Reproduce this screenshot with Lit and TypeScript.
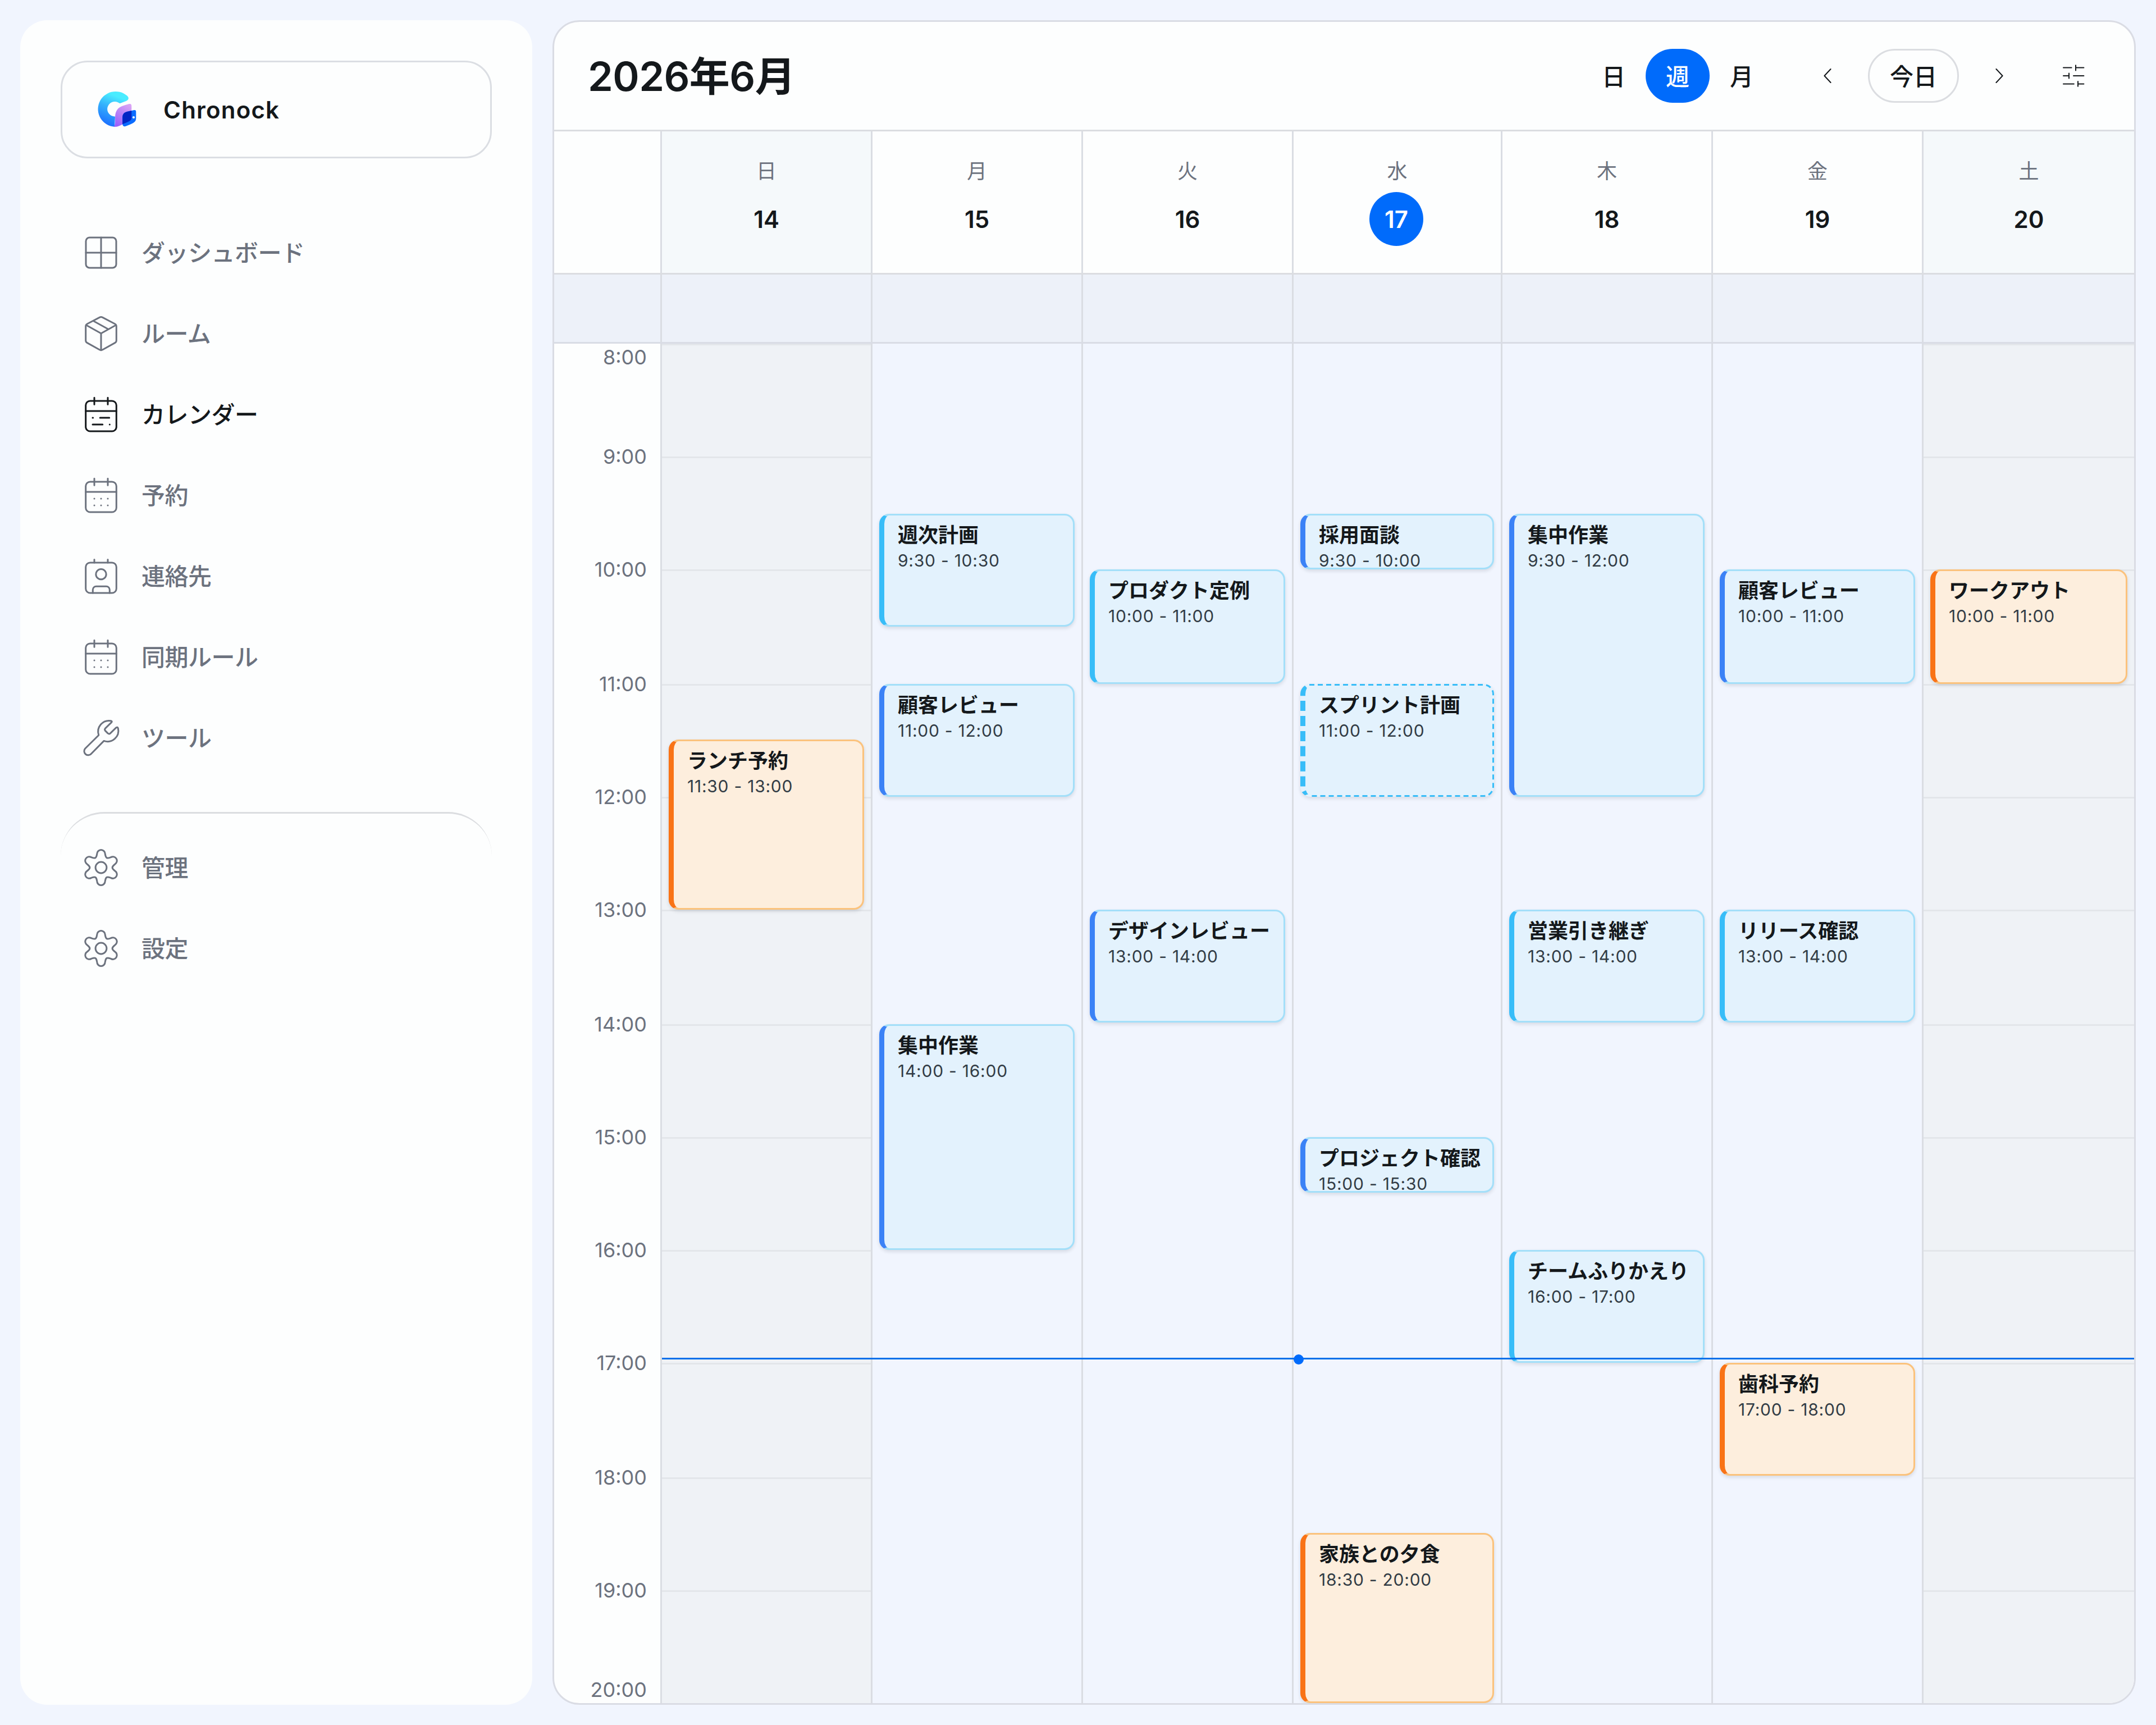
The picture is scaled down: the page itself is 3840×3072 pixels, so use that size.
import { LitElement, html, svg, css } from 'lit';
import { customElement, property } from 'lit/decorators.js';
import { classMap } from 'lit/directives/class-map.js';
import { styleMap } from 'lit/directives/style-map.js';

interface CalendarEvent {
  title: string;
  start: number;
  end: number;
  tone: 'sky' | 'blue' | 'orange' | 'tentative';
}

interface Day {
  name: string;
  date: number;
  weekend?: boolean;
  today?: boolean;
  events: CalendarEvent[];
}

const FIRST_HOUR = 8;
const UNIT = 3;
const HOUR_UNITS = 67.25;
const HOURS = [8, 9, 10, 11, 12, 13, 14, 15, 16, 17, 18, 19, 20];
// top of every hour row, snapped to whole layout units
const HOUR_TOPS = [0, 201, 402, 606, 807, 1008, 1212, 1413, 1614, 1815, 2019, 2220, 2421];

const startOffset = (time: number) => {
  const passed = time - FIRST_HOUR;
  return Number.isInteger(passed) ? HOUR_TOPS[passed] : Math.round(passed * HOUR_UNITS) * UNIT;
};

const endOffset = (time: number) => Math.ceil((time - FIRST_HOUR) * HOUR_UNITS - 0.5) * UNIT;

const clock = (time: number) => `${Math.floor(time)}:${time % 1 ? '30' : '00'}`;

const DAYS: Day[] = [
  { name: '日', date: 14, weekend: true, events: [{ title: 'ランチ予約', start: 11.5, end: 13, tone: 'orange' }] },
  {
    name: '月',
    date: 15,
    events: [
      { title: '週次計画', start: 9.5, end: 10.5, tone: 'sky' },
      { title: '顧客レビュー', start: 11, end: 12, tone: 'blue' },
      { title: '集中作業', start: 14, end: 16, tone: 'blue' },
    ],
  },
  {
    name: '火',
    date: 16,
    events: [
      { title: 'プロダクト定例', start: 10, end: 11, tone: 'sky' },
      { title: 'デザインレビュー', start: 13, end: 14, tone: 'blue' },
    ],
  },
  {
    name: '水',
    date: 17,
    today: true,
    events: [
      { title: '採用面談', start: 9.5, end: 10, tone: 'blue' },
      { title: 'スプリント計画', start: 11, end: 12, tone: 'tentative' },
      { title: 'プロジェクト確認', start: 15, end: 15.5, tone: 'blue' },
      { title: '家族との夕食', start: 18.5, end: 20, tone: 'orange' },
    ],
  },
  {
    name: '木',
    date: 18,
    events: [
      { title: '集中作業', start: 9.5, end: 12, tone: 'blue' },
      { title: '営業引き継ぎ', start: 13, end: 14, tone: 'sky' },
      { title: 'チームふりかえり', start: 16, end: 17, tone: 'sky' },
    ],
  },
  {
    name: '金',
    date: 19,
    events: [
      { title: '顧客レビュー', start: 10, end: 11, tone: 'blue' },
      { title: 'リリース確認', start: 13, end: 14, tone: 'sky' },
      { title: '歯科予約', start: 17, end: 18, tone: 'orange' },
    ],
  },
  { name: '土', date: 20, weekend: true, events: [{ title: 'ワークアウト', start: 10, end: 11, tone: 'orange' }] },
];

// one tooth of the gear, turned six times round the centre
const gearOutline = () => {
  let d = 'M8.65 6.2';
  for (let i = 0; i < 6; i++) {
    const a = (i * Math.PI) / 3;
    const p = (x: number, y: number) => {
      const dx = x - 12;
      const dy = y - 12;
      return `${(12 + dx * Math.cos(a) - dy * Math.sin(a)).toFixed(2)} ${(12 + dx * Math.sin(a) + dy * Math.cos(a)).toFixed(2)}`;
    };
    d += `C${p(9.35, 5.8)} ${p(9.4, 4.9)} ${p(9.6, 3.9)}A2.4 2.4 0 0 1 ${p(14.4, 3.9)}C${p(14.6, 4.9)} ${p(14.65, 5.8)} ${p(15.35, 6.2)}`;
  }
  return d + 'z';
};

const calendarFrame = svg`
  <rect x="2.9" y="4" width="18.2" height="18" rx="2.6" />
  <path d="M2.9 10h18.2M8 2.1v4M16 2.1v4" />`;

const ICONS: Record<string, unknown> = {
  dashboard: svg`
    <rect x="3" y="3" width="18" height="18" rx="2.2" />
    <path d="M12 3v18M3 12h18" />`,
  room: svg`
    <path d="M11.2 2.35a1.9 1.9 0 0 1 1.6 0l7.4 3.9a1.6 1.6 0 0 1 .9 1.4v8.5a1.6 1.6 0 0 1-.9 1.4l-7.4 4.1a1.9 1.9 0 0 1-1.6 0l-7.4-4.1a1.6 1.6 0 0 1-.9-1.4v-8.5a1.6 1.6 0 0 1 .9-1.4z" />
    <path d="M3.2 7l8.8 4.9L20.8 7M12 11.9v10M7.4 4.5l8.9 4.9" />`,
  calendar: svg`${calendarFrame}
    <path d="M7 14h.2M11.4 14h5.5M7 18h5.9M17.1 18h.01" />`,
  booking: svg`${calendarFrame}
    <path d="M8 14h.01M12 14h.01M16 14h.01M8 18h.01M12 18h.01M16 18h.01" />`,
  contact: svg`
    <rect x="2.9" y="4" width="18.2" height="18" rx="2.6" />
    <path d="M8 2.2v1.8M16 2.2v1.8M7.1 22v-1.9a2 2 0 0 1 2-2h6a2 2 0 0 1 2 2v1.9" />
    <circle cx="12" cy="10.9" r="3.05" />`,
  tool: svg`
    <path d="M18.2 2.8L14.5 6.4Q13.9 7.1 14.5 7.8L16 9.3Q16.8 10 17.5 9.3L21 5.9Q21.8 5.4 22.1 6.3A6.4 6.4 0 0 1 13.7 13.8L6.2 21.4A2.35 2.35 0 0 1 2.5 18.4L10.6 10.4A6.5 6.5 0 0 1 17.8 1.9Q18.8 2.2 18.2 2.8z" />`,
  gear: svg`
    <path d=${gearOutline()} />
    <circle cx="12" cy="12" r="3.3" />`,
  prev: svg`<path d="M14.8 6L9.2 12l5.6 6" />`,
  next: svg`<path d="M9.2 6l5.6 6-5.6 6" />`,
  filter: svg`
    <path d="M3 4.8h7.3M14 4.8h7.2M14 2.6v4.6M3 12h5M8 9.8v4.4M12 12h9.2M3 19.2h9.4M16 19.2h5.2M16 17v4.4" />`,
};

@customElement('ui-icon')
export class UiIcon extends LitElement {
  @property() name = '';

  static styles = css`
    :host {
      display: block;
      flex: none;
      width: 72px;
      height: 72px;
    }
    .glyph {
      display: block;
      width: 100%;
      height: 100%;
      fill: none;
      stroke: currentColor;
      stroke-width: 1;
      stroke-linecap: round;
      stroke-linejoin: round;
    }
  `;

  render() {
    return html`<svg class="glyph" viewBox="0 0 24 24">${ICONS[this.name]}</svg>`;
  }
}

@customElement('side-nav')
export class SideNav extends LitElement {
  static styles = css`
    :host {
      display: block;
      box-sizing: border-box;
      background: #fdfefe;
      border-radius: 48px;
      padding: 72px;
    }
    .brand {
      display: flex;
      align-items: center;
      gap: 48px;
      box-sizing: border-box;
      height: 174px;
      padding: 0 60px;
      border: 3px solid #dbdee3;
      border-radius: 48px;
      color: #14181b;
      font-size: 42px;
      font-weight: 600;
      letter-spacing: 1.2px;
    }
    .logo {
      width: 72px;
      height: 72px;
    }
    .menu {
      display: flex;
      flex-direction: column;
      margin-top: 96px;
    }
    .item {
      display: flex;
      align-items: center;
      gap: 36px;
      height: 144px;
      padding-left: 36px;
      color: #6c727e;
      font-size: 42px;
      font-weight: 500;
      letter-spacing: -0.5px;
    }
    .item.active {
      color: #14181b;
    }
    .label {
      padding-bottom: 6px;
    }
    .foot {
      display: flex;
      flex-direction: column;
      margin-top: 60px;
      padding-top: 24px;
      border-top: 3px solid #dbdde0;
      border-radius: 78px 78px 0 0;
    }
  `;

  item(icon: string, label: string, active = false) {
    return html`
      <a class=${classMap({ item: true, active })}>
        <ui-icon name=${icon}></ui-icon>
        <span class="label">${label}</span>
      </a>
    `;
  }

  render() {
    return html`
      <div class="brand">
        <svg class="logo" viewBox="0 0 72 72">
          <defs>
            <linearGradient id="c" x1=".7" y1="0" x2=".35" y2="1">
              <stop offset=".15" stop-color="#4aecff" />
              <stop offset=".5" stop-color="#34b0fc" />
              <stop offset="1" stop-color="#1b6dff" />
            </linearGradient>
            <linearGradient id="p" x1=".8" y1="0" x2=".3" y2="1">
              <stop offset="0" stop-color="#d9a4f5" />
              <stop offset="1" stop-color="#9a60fb" />
            </linearGradient>
          </defs>
          <path
            fill="url(#c)"
            d="M33.3 66.7A31.4 31.4 0 1 1 55.5 11.6Q58.5 14.6 57.6 17.2Q57 19.6 54 20.8L43.5 24.8Q41.5 25.2 40 23.8A13.2 13.2 0 1 0 34 48.4Q33.5 58 33.3 66.7z"
          />
          <path
            fill="url(#p)"
            d="M59 26.1Q63.3 25 63.3 30V51C63.3 56 58 57.5 51 60.5C44 63.5 40 67.5 31.5 66.7Q34.2 64 34.1 59V49C34.5 38 39 33 47 29.8Q53 27.5 59 26.1z"
          />
          <path
            fill="#0a6cff"
            d="M68 37Q71.3 36.5 71.3 40V52C71.3 58 66 60.5 60 63L53 65.8Q47 67.5 47.2 61V50C47.4 43 51 41 57 39.6Z"
          />
          <path fill="#0325c4" d="M63.3 38.1V51C63.3 56 58 57.5 51 60.5L47.2 62.2V50C47.4 43 51 41 57 39.6Z" />
          <circle cx="67" cy="50" r="2.1" fill="#fff" />
        </svg>
        <span>Chronock</span>
      </div>
      <nav class="menu">
        ${this.item('dashboard', 'ダッシュボード')}
        ${this.item('room', 'ルーム')}
        ${this.item('calendar', 'カレンダー', true)}
        ${this.item('booking', '予約')}
        ${this.item('contact', '連絡先')}
        ${this.item('booking', '同期ルール')}
        ${this.item('tool', 'ツール')}
      </nav>
      <div class="foot">
        ${this.item('gear', '管理')}
        ${this.item('gear', '設定')}
      </div>
    `;
  }
}

@customElement('week-calendar')
export class WeekCalendar extends LitElement {
  static styles = css`
    :host {
      display: flex;
      flex-direction: column;
      box-sizing: border-box;
      overflow: hidden;
      border: 3px solid #dadce4;
      border-radius: 48px;
      background: #fdfefe;
      color: #14181b;
    }
    .toolbar {
      display: flex;
      align-items: center;
      height: 192px;
      padding: 0 72px 0 60px;
      border-bottom: 3px solid #dbdde1;
    }
    .title {
      flex: 1;
      margin: 0;
      padding-bottom: 9px;
      font-size: 72px;
      font-weight: 600;
      letter-spacing: -0.6px;
    }
    .views {
      display: flex;
      align-items: center;
      margin-right: 48px;
      font-size: 42px;
      font-weight: 500;
    }
    .view {
      display: flex;
      align-items: center;
      justify-content: center;
      box-sizing: border-box;
      width: 114px;
      height: 96px;
      padding-bottom: 4px;
      border-radius: 48px;
    }
    .view.active {
      background: #006bfb;
      color: #fff;
    }
    .arrow {
      width: 48px;
      height: 48px;
      padding: 24px;
    }
    .now {
      box-sizing: border-box;
      display: flex;
      align-items: center;
      justify-content: center;
      width: 162px;
      height: 96px;
      margin: 0 24px;
      padding-bottom: 4px;
      border: 3px solid #dbdde1;
      border-radius: 48px;
      font-size: 42px;
      font-weight: 500;
    }
    .filter {
      width: 48px;
      height: 48px;
      margin: 0 12px 0 60px;
    }
    .row {
      display: grid;
      grid-template-columns: 192px 375px 375px 375px 372px 375px 375px 375px;
    }
    .head {
      height: 252px;
      border-bottom: 3px solid #dbdde1;
    }
    .allday {
      height: 120px;
      border-bottom: 3px solid #d9dce5;
      background: #edf1f9;
    }
    .cell {
      box-sizing: border-box;
      border-right: 3px solid #dadde3;
    }
    .cell:nth-child(8) {
      border-right: none;
    }
    .dayhead {
      display: flex;
      flex-direction: column;
      align-items: center;
      padding-top: 42px;
    }
    .dayhead.weekend {
      background: #f5f9fb;
    }
    .name {
      height: 66px;
      line-height: 58px;
      color: #6c727e;
      font-size: 36px;
    }
    .date {
      display: flex;
      align-items: center;
      justify-content: center;
      width: 96px;
      height: 96px;
      border-radius: 50%;
      font-size: 42px;
      font-weight: 600;
    }
    .date.today {
      margin-right: 3px;
      background: #006bfb;
      color: #fff;
    }
    .body {
      position: relative;
      flex: 1;
    }
    .ruler {
      position: relative;
      color: #6c727e;
      font-size: 36px;
    }
    .hour {
      position: absolute;
      right: 24px;
      line-height: 48px;
      transform: translateY(-50%);
    }
    .hour:first-child {
      transform: none;
    }
    .hour:last-child {
      transform: translateY(-100%);
    }
    .day {
      position: relative;
      background: #f1f5fe;
    }
    .day.weekend {
      background: #eff2f6;
    }
    .line {
      position: absolute;
      left: 0;
      right: 0;
      height: 3px;
      background: #e3e6ea;
    }
    .event {
      position: absolute;
      left: 12px;
      right: 12px;
      box-sizing: border-box;
      overflow: hidden;
      padding: 13px 0 0 24px;
      border: 3px solid #a3dff9;
      border-left: 9px solid #38bdf8;
      border-radius: 18px;
      background: #e3f2fd;
      box-shadow: 0 3px 6px rgba(20, 24, 40, 0.12);
      white-space: nowrap;
    }
    .event.blue {
      border-left-color: #3b82f6;
    }
    .event.orange {
      border-color: #fbc27c;
      border-left-color: #f97316;
      background: #fdeedd;
    }
    .event.tentative {
      overflow: visible;
      border-style: dashed;
      border-color: transparent;
      border-left-color: #38bdf8;
    }
    .dashes {
      position: absolute;
      left: -9px;
      top: -3px;
      width: 345px;
      height: 201px;
      fill: none;
      stroke: #38bdf8;
      stroke-width: 3;
      stroke-dasharray: 9 6;
    }
    .event-title {
      line-height: 45px;
      font-size: 36px;
      font-weight: 600;
    }
    .event-time {
      line-height: 45px;
      color: #323c45;
      font-size: 30px;
      letter-spacing: 0.75px;
    }
    .marker {
      position: absolute;
      left: 192px;
      right: 0;
      top: 1806px;
      height: 3px;
      background: #0070ea;
    }
    .dot {
      position: absolute;
      left: 1125px;
      top: -6px;
      width: 18px;
      height: 18px;
      border-radius: 50%;
      background: #006bfb;
    }
  `;

  event(event: CalendarEvent) {
    const top = startOffset(event.start);
    const box = { top: `${top}px`, height: `${endOffset(event.end) - top}px` };
    return html`
      <div class="event ${event.tone}" style=${styleMap(box)}>
        ${event.tone === 'tentative'
          ? html`<svg class="dashes" viewBox="0 0 345 201">
              <path d="M16 1.5H327A16.5 16.5 0 0 1 343.5 18V183A16.5 16.5 0 0 1 327 199.5H16" />
            </svg>`
          : ''}
        <div class="event-title">${event.title}</div>
        <div class="event-time">${clock(event.start)} - ${clock(event.end)}</div>
      </div>
    `;
  }

  day(day: Day) {
    return html`
      <div class=${classMap({ cell: true, day: true, weekend: !!day.weekend })}>
        ${day.weekend
          ? HOUR_TOPS.slice(0, -1).map((top) => html`<div class="line" style=${styleMap({ top: `${top}px` })}></div>`)
          : ''}
        ${day.events.map((event) => this.event(event))}
      </div>
    `;
  }

  render() {
    return html`
      <header class="toolbar">
        <h1 class="title">2026年6月</h1>
        <div class="views">
          <span class="view">日</span>
          <span class="view active">週</span>
          <span class="view">月</span>
        </div>
        <ui-icon class="arrow" name="prev"></ui-icon>
        <span class="now">今日</span>
        <ui-icon class="arrow" name="next"></ui-icon>
        <ui-icon class="filter" name="filter"></ui-icon>
      </header>
      <div class="row head">
        <div class="cell"></div>
        ${DAYS.map(
          (day) => html`
            <div class=${classMap({ cell: true, dayhead: true, weekend: !!day.weekend })}>
              <span class="name">${day.name}</span>
              <span class=${classMap({ date: true, today: !!day.today })}>${day.date}</span>
            </div>
          `
        )}
      </div>
      <div class="row allday">
        <div class="cell"></div>
        ${DAYS.map(() => html`<div class="cell"></div>`)}
      </div>
      <div class="row body">
        <div class="cell ruler">
          ${HOURS.map(
            (hour, i) => html`<span class="hour" style=${styleMap({ top: `${HOUR_TOPS[i]}px` })}>${hour}:00</span>`
          )}
        </div>
        ${DAYS.map((day) => this.day(day))}
        <div class="marker"><div class="dot"></div></div>
      </div>
    `;
  }
}

@customElement('app-root')
export class AppRoot extends LitElement {
  static styles = css`
    :host {
      display: grid;
      grid-template-columns: 912px 1fr;
      gap: 36px;
      box-sizing: border-box;
      width: 3840px;
      height: 3072px;
      padding: 36px;
      background: #f1f5fe;
      font-family: Inter, 'Noto Sans CJK JP', sans-serif;
    }
  `;

  render() {
    return html`
      <side-nav></side-nav>
      <week-calendar></week-calendar>
    `;
  }
}
